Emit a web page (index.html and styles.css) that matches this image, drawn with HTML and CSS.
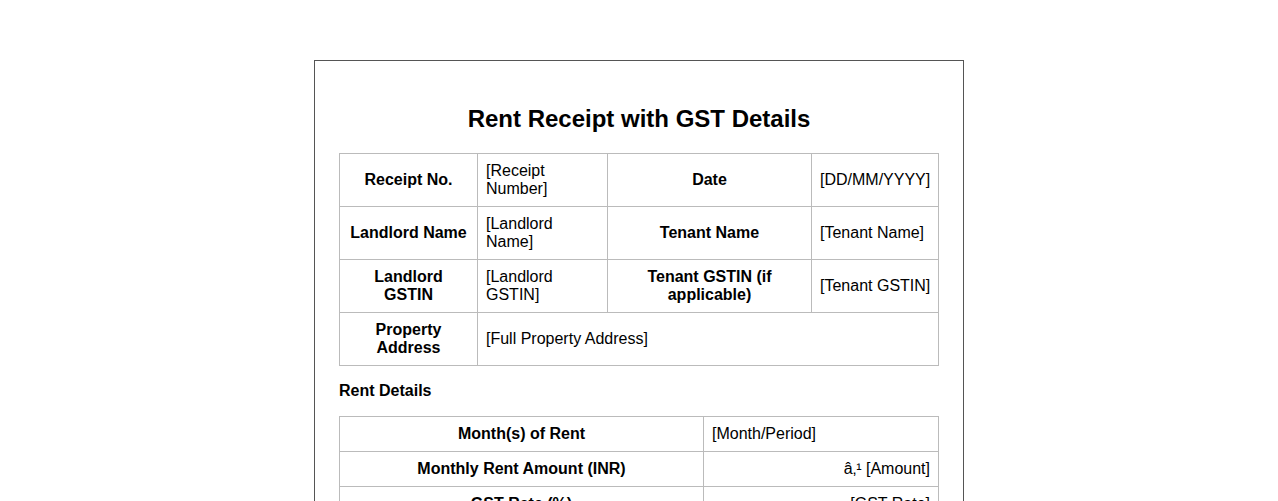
FILE: index.html
```html
<!DOCTYPE html>
<html>
<head>
<meta charset="utf-8">
<link rel="stylesheet" href="styles.css">
</head>
<body>
<div class="receipt">
  <h1 class="title">Rent Receipt with GST Details</h1>
  <table class="grid info">
    <colgroup>
      <col class="c1"><col class="c2"><col class="c3"><col class="c4">
    </colgroup>
    <tr>
      <th>Receipt No.</th><td>[Receipt Number]</td>
      <th>Date</th><td class="nowrap">[DD/MM/YYYY]</td>
    </tr>
    <tr>
      <th>Landlord Name</th><td>[Landlord Name]</td>
      <th>Tenant Name</th><td class="nowrap">[Tenant Name]</td>
    </tr>
    <tr>
      <th>Landlord GSTIN</th><td>[Landlord GSTIN]</td>
      <th>Tenant GSTIN (if applicable)</th><td class="nowrap">[Tenant GSTIN]</td>
    </tr>
    <tr>
      <th>Property Address</th><td colspan="3">[Full Property Address]</td>
    </tr>
  </table>
  <p class="section">Rent Details</p>
  <table class="grid details">
    <colgroup>
      <col class="d1"><col class="d2">
    </colgroup>
    <tr><th>Month(s) of Rent</th><td>[Month/Period]</td></tr>
    <tr><th>Monthly Rent Amount (INR)</th><td class="num">â‚¹ [Amount]</td></tr>
    <tr><th>GST Rate (%)</th><td class="num">[GST Rate]</td></tr>
    <tr><th>GST Amount (INR)</th><td class="num">â‚¹ [GST Amount]</td></tr>
    <tr><th>Total Amount Received (INR)</th><td class="num">â‚¹ [Total Amount]</td></tr>
  </table>
</div>
</body>
</html>
```

FILE: styles.css
```css
html, body {
  margin: 0;
  padding: 0;
  background: #fff;
}
body {
  font-family: "Liberation Sans", Arial, sans-serif;
  font-size: 16px;
  color: #000;
  padding-top: 60px;
}
.receipt {
  width: 600px;
  margin: 0 auto;
  padding: 24px;
  border: 1px solid #555;
}
.title {
  font-size: 24px;
  font-weight: bold;
  text-align: center;
  margin: 20px 0 20px;
}
.grid {
  width: 599px;
  border-collapse: collapse;
  table-layout: fixed;
}
.grid th, .grid td {
  border: 1px solid #bbb;
  padding: 8px;
  line-height: 18px;
  vertical-align: middle;
}
.grid th {
  font-weight: bold;
  text-align: center;
}
.grid td {
  text-align: left;
}
.grid td.num {
  text-align: right;
}
.grid td.nowrap {
  white-space: nowrap;
}
.c1 { width: 138px; }
.c2 { width: 130px; }
.c3 { width: 204px; }
.c4 { width: 127px; }
.d1 { width: 364px; }
.d2 { width: 235px; }
.section {
  font-weight: bold;
  margin: 16px 0;
  line-height: 18px;
}
```
